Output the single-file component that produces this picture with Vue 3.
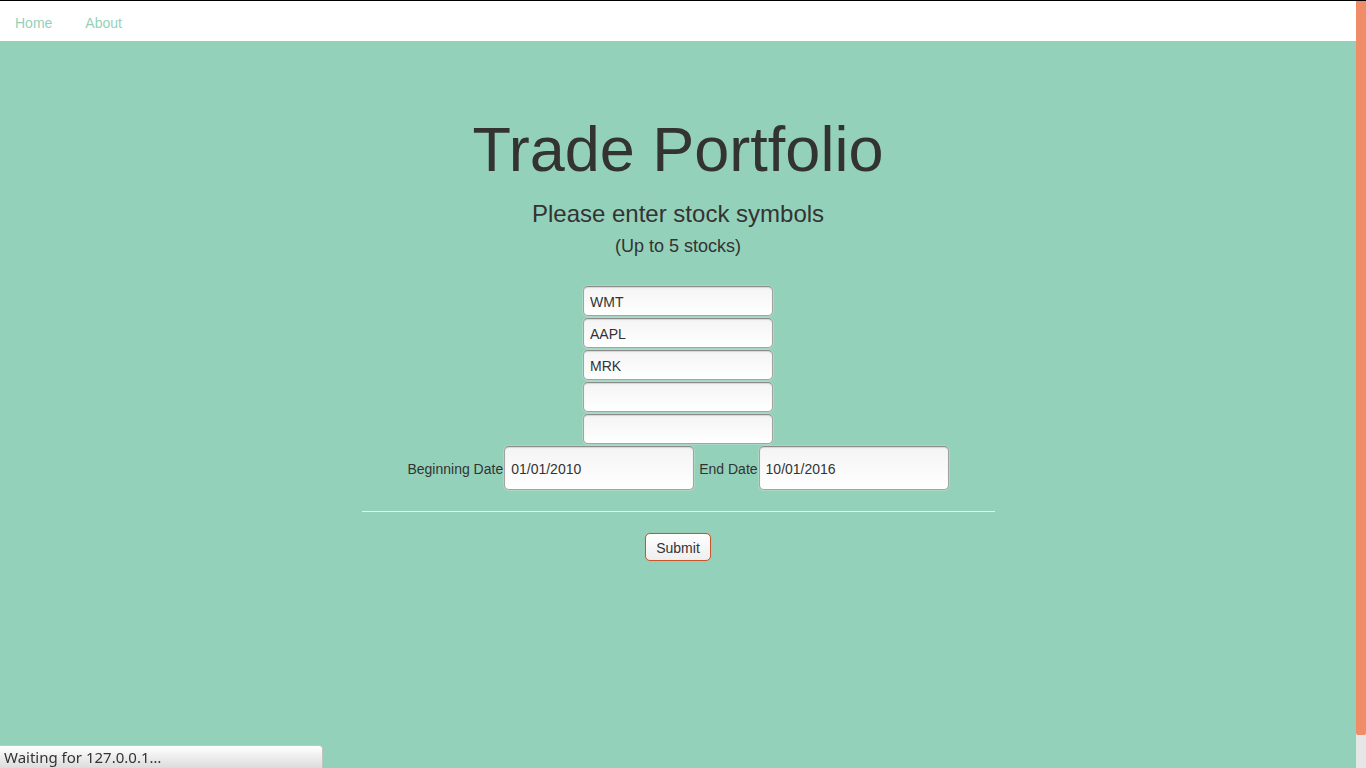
<script setup>
import { ref } from 'vue'

const symbols = ref(['WMT', 'AAPL', 'MRK', '', ''])
const beginning = ref('01/01/2010')
const end = ref('10/01/2016')
</script>

<template>
  <div class="window">
    <div class="page">
      <nav class="nav">
        <a href="#">Home</a>
        <a href="#about">About</a>
      </nav>
      <main class="content">
        <h1>Trade Portfolio</h1>
        <h2>Please enter stock symbols</h2>
        <h3>(Up to 5 stocks)</h3>
        <form @submit.prevent>
          <div class="symbols">
            <input
              v-for="(symbol, i) in symbols"
              :key="i"
              v-model="symbols[i]"
              type="text"
              class="field"
              :aria-label="`Stock symbol ${i + 1}`"
            />
          </div>
          <div class="dates">
            <div class="date">
              <label for="beginning">Beginning Date</label>
              <input id="beginning" v-model="beginning" type="text" class="field tall" />
            </div>
            <div class="date">
              <label for="end">End Date</label>
              <input id="end" v-model="end" type="text" class="field tall" />
            </div>
          </div>
          <hr />
          <button type="submit">Submit</button>
        </form>
      </main>
    </div>
    <div class="scrollbar"><div class="thumb"></div></div>
    <div class="status">Waiting for 127.0.0.1…</div>
  </div>
</template>

<style>
body {
  background: #94d1ba;
}
</style>

<style scoped>
.window {
  box-sizing: border-box;
  display: grid;
  grid-template-columns: 1fr 10px;
  min-height: 100vh;
  border-top: 1px solid #000;
  background: #94d1ba;
  color: #333;
  font-family: "Liberation Sans", Arial, sans-serif;
  font-size: 14px;
  line-height: 20px;
}
.nav {
  display: flex;
  gap: 3px;
  background: #fff;
}
.nav a {
  padding: 12px 15px 8px;
  color: #94d1ba;
  text-decoration: none;
}
.content {
  padding: 73px 16px 0;
  text-align: center;
}
h1,
h2,
h3 {
  margin: 0;
  font-weight: 400;
}
h1 {
  font-size: 63px;
  line-height: 70px;
}
h2 {
  margin-top: 17px;
  font-size: 24px;
  line-height: 26px;
}
h3 {
  margin-top: 9px;
  font-size: 18px;
  line-height: 20px;
}
.symbols {
  display: flex;
  flex-direction: column;
  align-items: center;
  gap: 2px;
  margin-top: 30px;
}
.field {
  box-sizing: border-box;
  width: 190px;
  height: 30px;
  padding: 1px 6px 0;
  border: 1px solid #a3a3a3;
  border-top-color: #8c8c8c;
  border-radius: 5px;
  outline: 0;
  background: linear-gradient(#f4f4f4, #fff);
  box-shadow: inset 0 1px 1px #d5d5d5, 0 0 0 1px #a9d8c7, 0 1px 0 #c5e5da;
  color: #333;
  font: inherit;
}
.field.tall {
  height: 44px;
}
.dates {
  display: flex;
  flex-wrap: wrap;
  justify-content: center;
  gap: 5px;
  margin-top: 2px;
}
.date {
  display: flex;
  align-items: center;
  gap: 1px;
}
.date label {
  padding-top: 1px;
}
hr {
  max-width: 633px;
  margin: 21px auto;
  border: 0;
  border-top: 1px solid #eee;
}
button {
  height: 28px;
  padding: 1px 10px 0;
  border: 1px solid #c9562c;
  border-radius: 5px;
  background: linear-gradient(#fff, #eee);
  box-shadow: 0 0 1px #e08a68;
  color: #333;
  font: inherit;
}
.scrollbar {
  background: #e6e6e6;
}
.thumb {
  height: 95.7%;
  border-radius: 0 0 2px 2px;
  background: #f08d68;
}
.status {
  position: fixed;
  bottom: 0;
  left: 0;
  box-sizing: border-box;
  width: 323px;
  height: 23px;
  padding: 0 4px;
  border: 1px solid #c4c4c4;
  border-width: 1px 1px 0 0;
  border-top-right-radius: 4px;
  background: linear-gradient(#fff, #dcdcdc);
  font-family: "Noto Sans", sans-serif;
  font-size: 15px;
  line-height: 23px;
}
</style>
